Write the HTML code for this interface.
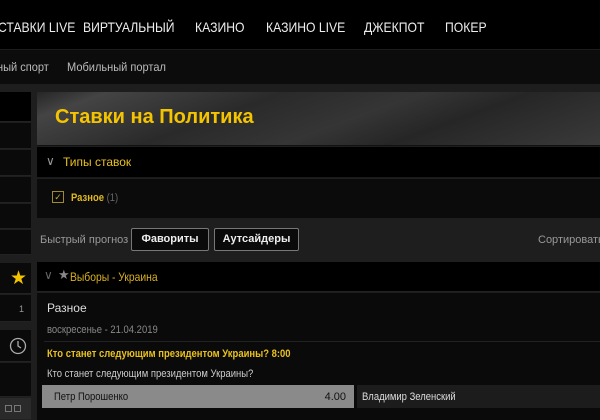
<!DOCTYPE html><html><head><meta charset="utf-8"><style>
*{margin:0;padding:0;box-sizing:border-box}
body{width:600px;height:420px;overflow:hidden;background:#1e1e1e;font-family:"Liberation Sans",sans-serif;position:relative;color:#ddd}
.a{position:absolute}
.c{transform:scaleX(.86);transform-origin:0 0;white-space:nowrap}
.top{left:0;top:0;width:600px;height:50px;background:#000;border-bottom:1px solid #1c1c1c}
.top span{position:absolute;top:19px;font-size:14px;color:#eee;transform:scaleX(.87);transform-origin:0 0;white-space:nowrap}
.sub{left:0;top:50px;width:600px;height:34px;background:#0c0c0c}
.sub span{position:absolute;top:10px;font-size:12px;color:#bbb;transform:scaleX(.92);transform-origin:0 0;white-space:nowrap}
.sc{left:0;width:31px;background:#0a0a0a;border-bottom:1px solid #222}
</style></head><body>
<div class="a top">
<span style="left:-2px">СТАВКИ LIVE</span><span style="left:83px">ВИРТУАЛЬНЫЙ</span><span style="left:195px">КАЗИНО</span><span style="left:266px">КАЗИНО LIVE</span><span style="left:364px">ДЖЕКПОТ</span><span style="left:445px">ПОКЕР</span>
</div>
<div class="a sub"><span style="left:-3px">ный спорт</span><span style="left:67px">Мобильный портал</span></div>
<div class="a sc" style="top:92px;height:30px;background:#000"></div>
<div class="a sc" style="top:123px;height:26px"></div>
<div class="a sc" style="top:150px;height:26px"></div>
<div class="a sc" style="top:177px;height:26px"></div>
<div class="a sc" style="top:204px;height:25px"></div>
<div class="a sc" style="top:230px;height:25px"></div>
<div class="a sc" style="top:263px;height:31px;color:#f5c400;font-size:19px;text-align:right;padding:4px 4px 0 0">★</div>
<div class="a sc" style="top:295px;height:27px;font-size:9px;color:#999;text-align:right;padding:9px 7px 0 0">1</div>
<div class="a sc" style="top:330px;height:32px"><svg class="a" style="left:9px;top:7px" width="18" height="18" viewBox="0 0 18 18"><circle cx="9" cy="9" r="7.5" fill="none" stroke="#aaa" stroke-width="1.3"/><path d="M9 4v5l3 2" fill="none" stroke="#aaa" stroke-width="1.3"/></svg></div>
<div class="a sc" style="top:363px;height:34px"></div>
<div class="a sc" style="top:398px;height:22px;background:#2a2a2a"><span class="a" style="left:5px;top:7px;width:7px;height:7px;border:1px solid #777"></span><span class="a" style="left:14px;top:7px;width:7px;height:7px;border:1px solid #777"></span></div>
<div class="a" style="left:37px;top:92px;width:563px;height:54px;background:linear-gradient(160deg,#262626 0%,#444 10%,#2a2a2a 35%,#353535 55%,#262626 70%,#3a3a3a 100%);border-bottom:1px solid #111"></div>
<div class="a" style="left:55px;top:106px;font-size:20px;font-weight:bold;color:#f5c400">Ставки на Политика</div>
<div class="a" style="left:37px;top:147px;width:563px;height:31px;background:#000;border-bottom:1px solid #1a1a1a"><span class="a" style="left:9px;top:7px;font-size:12px;color:#999">∨</span><span class="a" style="left:26px;top:8px;font-size:12px;color:#e8c020">Типы ставок</span></div>
<div class="a" style="left:37px;top:179px;width:563px;height:39px;background:#0b0b0b"><span class="a" style="left:15px;top:12px;width:12px;height:12px;border:1px solid #a08a30;font-size:9px;color:#c9a830;line-height:10px;text-align:center">✓</span><span class="a c" style="left:34px;top:13px;font-size:11px;font-weight:bold;color:#e0b820">Разное <span style="color:#666;font-weight:normal">(1)</span></span></div>
<div class="a" style="left:40px;top:234px;font-size:11px;color:#999">Быстрый прогноз</div>
<div class="a" style="left:131px;top:228px;width:78px;height:23px;background:#0a0a0a;border:1px solid #777;border-radius:2px;font-size:11px;font-weight:bold;color:#eee;text-align:center;line-height:21px">Фавориты</div>
<div class="a" style="left:214px;top:228px;width:85px;height:23px;background:#0a0a0a;border:1px solid #777;border-radius:2px;font-size:11px;font-weight:bold;color:#eee;text-align:center;line-height:21px">Аутсайдеры</div>
<div class="a" style="left:538px;top:234px;font-size:11px;color:#999;white-space:nowrap">Сортировать</div>
<div class="a" style="left:37px;top:262px;width:563px;height:30px;background:#000;border-bottom:1px solid #222"><span class="a" style="left:7px;top:6px;font-size:12px;color:#666">∨</span><span class="a" style="left:21px;top:5px;font-size:13px;color:#888">★</span><span class="a c" style="left:33px;top:8px;font-size:12px;color:#d8b020">Выборы - Украина</span></div>
<div class="a" style="left:37px;top:293px;width:563px;height:127px;background:#0a0a0a"></div>
<div class="a" style="left:47px;top:301px;font-size:12px;color:#ddd">Разное</div>
<div class="a c" style="left:47px;top:324px;font-size:11px;color:#888">воскресенье - 21.04.2019</div>
<div class="a" style="left:44px;top:341px;width:556px;height:1px;background:#222"></div>
<div class="a c" style="left:47px;top:348px;font-size:11px;font-weight:bold;color:#e8c020">Кто станет следующим президентом Украины? 8:00</div>
<div class="a c" style="left:47px;top:368px;font-size:11px;color:#ccc">Кто станет следующим президентом Украины?</div>
<div class="a" style="left:42px;top:385px;width:312px;height:23px;background:#8a8a8a"><span class="a c" style="left:12px;top:6px;font-size:11px;color:#111">Петр Порошенко</span><span class="a" style="right:8px;top:6px;font-size:11px;color:#111">4.00</span></div>
<div class="a" style="left:357px;top:385px;width:243px;height:23px;background:#1c1c1c"><span class="a c" style="left:5px;top:6px;font-size:11px;color:#ddd">Владимир Зеленский</span></div>
</body></html>
